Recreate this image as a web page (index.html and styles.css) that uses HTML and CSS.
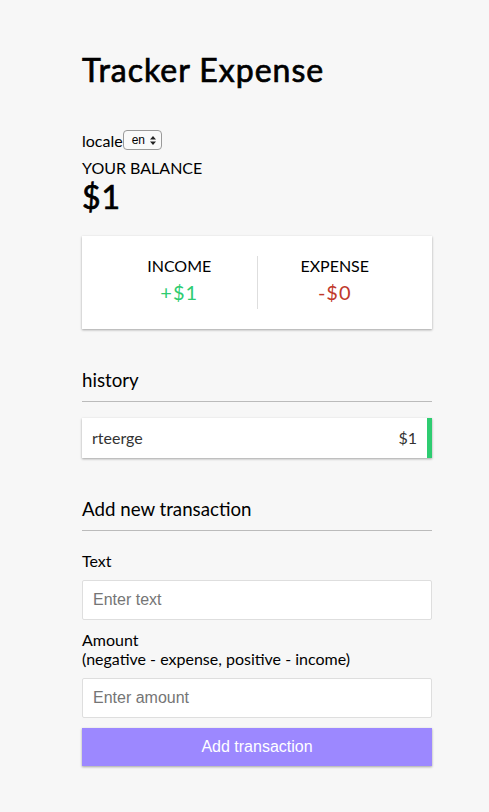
FILE: index.html
```html
<!DOCTYPE html>
<html lang="en">
<head>
<meta charset="utf-8">
<title>Expense Tracker</title>
<link rel="stylesheet" href="styles.css">
</head>
<body>
  <div class="container">
    <h1 class="title">Tracker Expense</h1>
    <div class="locale-row">
      <span>locale</span><span class="select"><span class="select-value">en</span><svg class="select-arrows" width="6" height="9" viewBox="0 0 6 9"><path d="M0 3.5 L3 0 L6 3.5 Z M0 5.5 L3 9 L6 5.5 Z" fill="#222"/></svg></span>
    </div>
    <h4 class="balance-label">Your Balance</h4>
    <h1 class="balance">$1</h1>

    <div class="inc-exp-container">
      <div class="inc-exp">
        <h4>Income</h4>
        <p class="money plus">+$1</p>
      </div>
      <div class="inc-exp">
        <h4>Expense</h4>
        <p class="money minus">-$0</p>
      </div>
    </div>

    <h3 class="section-title history-title">history</h3>
    <ul class="list">
      <li class="plus"><span>rteerge</span><span>$1</span></li>
    </ul>

    <h3 class="section-title">Add new transaction</h3>
    <form class="form">
      <div class="form-control">
        <label class="label">Text</label>
        <input class="field" type="text" placeholder="Enter text">
      </div>
      <div class="form-control">
        <label class="label">Amount <br>(negative - expense, positive - income)</label>
        <input class="field" type="number" placeholder="Enter amount">
      </div>
      <button class="btn" type="button">Add transaction</button>
    </form>
  </div>
</body>
</html>
```

FILE: styles.css
```css
* {
  box-sizing: border-box;
}

body {
  background-color: #f7f7f7;
  margin: 0;
  font-family: "Lato", "Noto Sans", sans-serif;
  color: #000;
}

.container {
  width: 350px;
  margin: 0 0 0 82px;
  padding-top: 51px;
}

.title {
  font-size: 32px;
  font-weight: 400;
  letter-spacing: 1px;
  margin: 0;
  line-height: 38px;
  -webkit-text-stroke: 0.7px #000;
}

.locale-row {
  display: flex;
  align-items: center;
  margin-top: 41px;
  font-size: 16px;
  height: 20px;
}

.select {
  display: inline-flex;
  align-items: center;
  gap: 5px;
  height: 20px;
  padding: 0 5px 0 8px;
  border: 1px solid #9a9a9a;
  border-radius: 4px;
  background: #fafafa;
  font-family: "Liberation Sans", Arial, sans-serif;
  font-size: 12px;
}

.balance-label {
  margin: 8px 0 0;
  font-size: 16px;
  font-weight: 400;
  text-transform: uppercase;
  line-height: 19px;
}

.balance {
  margin: 1px 0 0;
  font-size: 32px;
  font-weight: 400;
  letter-spacing: 1px;
  line-height: 38px;
  -webkit-text-stroke: 0.7px #000;
}

.inc-exp-container {
  background-color: #fff;
  box-shadow: 0 1px 3px rgba(0, 0, 0, 0.12), 0 1px 2px rgba(0, 0, 0, 0.24);
  padding: 20px;
  display: flex;
  margin: 20px 0;
}

.inc-exp {
  flex: 1;
  text-align: center;
}

.inc-exp:first-of-type {
  border-right: 1px solid #dedede;
}

.inc-exp h4 {
  margin: 0;
  font-size: 16px;
  font-weight: 400;
  text-transform: uppercase;
  line-height: 19px;
}

.money {
  font-size: 20px;
  letter-spacing: 1px;
  margin: 5px 0;
  line-height: 24px;
}

.money.plus {
  color: #2ecc71;
}

.money.minus {
  color: #c0392b;
}

.section-title {
  font-size: 18.72px;
  font-weight: 400;
  border-bottom: 1px solid #bbb;
  padding-bottom: 10px;
  margin: 40px 0 10px;
  line-height: 22px;
}

.list {
  list-style-type: none;
  padding: 0;
  margin: 16px 0 40px;
}

.list li {
  background-color: #fff;
  box-shadow: 0 1px 3px rgba(0, 0, 0, 0.12), 0 1px 2px rgba(0, 0, 0, 0.24);
  color: #333;
  display: flex;
  justify-content: space-between;
  padding: 10px;
  margin: 10px 0;
  font-size: 16px;
  line-height: 20px;
}

.list li.plus {
  border-right: 5px solid #2ecc71;
}

.form-control {
  display: block;
}

.label {
  display: inline-block;
  margin: 10px 0;
  font-size: 16px;
  line-height: 19px;
}

.field {
  border: 1px solid #dedede;
  border-radius: 2px;
  display: block;
  font-family: "Liberation Sans", Arial, sans-serif;
  font-size: 16px;
  padding: 10px;
  width: 100%;
  height: 40px;
  background: #fff;
  color: #333;
}

.field::placeholder {
  color: #757575;
}

.btn {
  background-color: #9c88ff;
  box-shadow: 0 1px 3px rgba(0, 0, 0, 0.12), 0 1px 2px rgba(0, 0, 0, 0.24);
  color: #fff;
  border: 0;
  display: block;
  font-family: "Liberation Sans", Arial, sans-serif;
  font-size: 16px;
  margin: 10px 0 30px;
  padding: 10px;
  width: 100%;
  height: 38px;
}
```
